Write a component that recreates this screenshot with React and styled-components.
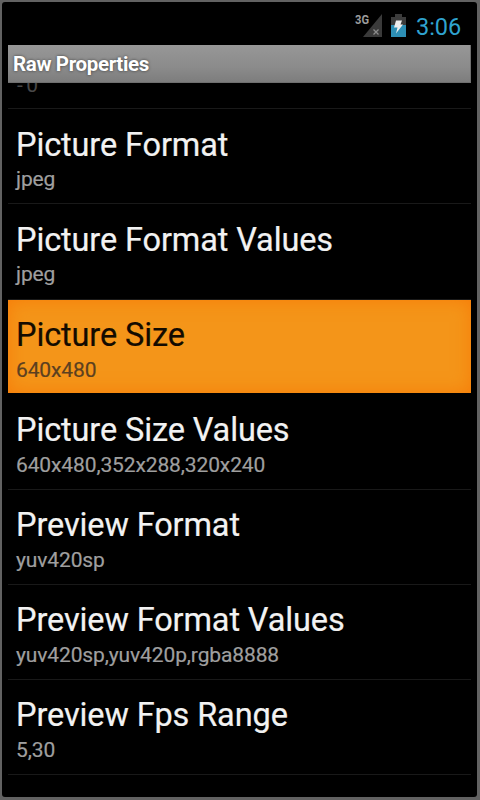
import React from 'react';
import styled, { createGlobalStyle } from 'styled-components';

const preferences = [
  { title: 'Picture Format', summary: 'jpeg' },
  { title: 'Picture Format Values', summary: 'jpeg' },
  { title: 'Picture Size', summary: '640x480', selected: true },
  { title: 'Picture Size Values', summary: '640x480,352x288,320x240' },
  { title: 'Preview Format', summary: 'yuv420sp' },
  { title: 'Preview Format Values', summary: 'yuv420sp,yuv420p,rgba8888' },
  { title: 'Preview Fps Range', summary: '5,30' },
];

const GlobalStyle = createGlobalStyle`
  * {
    box-sizing: border-box;
  }

  body {
    margin: 0;
    background: #626262;
    font-family: Roboto, sans-serif;
  }
`;

const Device = styled.div`
  width: 480px;
  height: 800px;
  padding: 2px 3px 3px 2px;
  background: #626262;
  overflow: hidden;
`;

const Screen = styled.div`
  display: flex;
  flex-direction: column;
  height: 795px;
  padding: 0 6px;
  background: #000;
  border-radius: 3px;
  overflow: hidden;
`;

const StatusBar = styled.header`
  display: flex;
  flex: none;
  justify-content: flex-end;
  align-items: flex-start;
  height: 43px;
  padding: 11px 10px 0 0;
`;

const SignalIcon = styled.svg`
  width: 28px;
  height: 26px;
  margin-right: 9px;
`;

const BatteryIcon = styled.svg`
  width: 15px;
  height: 26px;
  margin-right: 10px;
`;

const Clock = styled.time`
  color: #2fa3cf;
  font-size: 23.5px;
  line-height: 28px;
  letter-spacing: -0.1px;
`;

const TitleBar = styled.h1`
  flex: none;
  height: 38px;
  margin: 0;
  padding: 0 5px;
  border: 1px solid #6f6f6f;
  border-width: 0 1px 1px 0;
  background: linear-gradient(#979797, #8b8b8b 60%, #7d7d7d);
  color: #fff;
  font-size: 20.5px;
  font-weight: 700;
  line-height: 39px;
  letter-spacing: -0.35px;
  text-shadow: 0 0 3px rgba(0, 0, 0, 0.6);
`;

const List = styled.ul`
  display: flex;
  flex: 1;
  flex-direction: column;
  justify-content: flex-end;
  min-height: 0;
  margin: 0;
  padding: 0 0 22px;
  list-style: none;
  overflow: hidden;
`;

/* Tail of the row that is scrolled under the title bar */
const ScrolledRow = styled.li`
  display: flex;
  flex: none;
  align-items: flex-end;
  height: 26px;
  padding: 0 9px 10px;
  border-bottom: 1px solid #191919;
  color: #484848;
  font-size: 21px;
  line-height: 25px;
  letter-spacing: 3.5px;
  overflow: hidden;
`;

const Row = styled.li`
  flex: none;
  height: 95.1px;
  padding: 16.5px 8px 0;
  border-bottom: ${(props) => (props.$selected ? '2px solid #000' : '1px solid #191919')};
  background: ${(props) => (props.$selected ? '#f49519' : '#000')};
  box-shadow: ${(props) => (props.$selected ? 'inset 0 0 18px #f77c08' : 'none')};
  color: ${(props) => (props.$selected ? '#130b00' : '#f2f2f2')};
`;

const Title = styled.div`
  font-size: 32.5px;
  line-height: 38.5px;
  letter-spacing: -0.12px;
  white-space: nowrap;
  -webkit-text-stroke: 0.2px;
`;

const Summary = styled.div`
  color: ${(props) => (props.$selected ? '#5b4020' : '#9f9f9f')};
  font-size: 21px;
  line-height: 31px;
  letter-spacing: -0.12px;
  white-space: nowrap;
  -webkit-text-stroke: 0.2px;
`;

const App = () => (
  <>
    <GlobalStyle />
    <Device>
      <Screen>
        <StatusBar>
          <SignalIcon viewBox="0 0 28 26">
            <path d="M28 1v23H9z" fill="#3a3a3a" />
            <text
              x="1"
              y="11"
              fill="#9c9c9c"
              fontFamily="Roboto"
              fontSize="13"
              fontWeight="700"
              textLength="14"
              lengthAdjust="spacingAndGlyphs"
            >
              3G
            </text>
            <path d="m19.5 16.5 5 5m0-5-5 5" stroke="#8c8c8c" strokeWidth="1.3" />
          </SignalIcon>
          <BatteryIcon viewBox="0 0 15 26">
            <path d="M4 1h7v3h4v8H0V4h4z" fill="#3c3c3c" />
            <path d="M0 12h15v12H0z" fill="#2d8fb5" />
            <path d="M5 7.5h6l-1.5 4H12l-7 9 1.5-6H3z" fill="#eee" />
          </BatteryIcon>
          <Clock>3:06</Clock>
        </StatusBar>
        <TitleBar>Raw Properties</TitleBar>
        <List>
          <ScrolledRow>-0</ScrolledRow>
          {preferences.map(({ title, summary, selected }) => (
            <Row key={title} $selected={selected}>
              <Title>{title}</Title>
              <Summary $selected={selected}>{summary}</Summary>
            </Row>
          ))}
        </List>
      </Screen>
    </Device>
  </>
);

export default App;
